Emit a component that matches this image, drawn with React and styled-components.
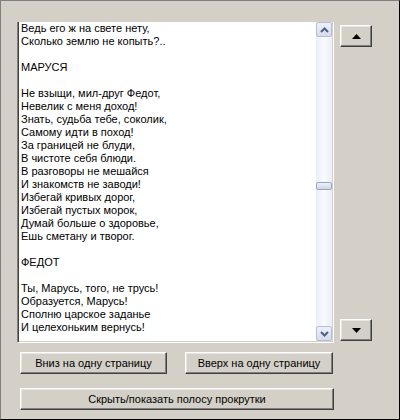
import styled, { createGlobalStyle } from "styled-components";

const GlobalStyle = createGlobalStyle`
  html, body {
    margin: 0;
    padding: 0;
    background: #d4d0c8;
  }
  * {
    box-sizing: border-box;
  }
`;

const POEM = [
  "Ведь его ж на свете нету,",
  "Сколько землю не копыть?..",
  "",
  "МАРУСЯ",
  "",
  "Не взыщи, мил-друг Федот,",
  "Невелик с меня доход!",
  "Знать, судьба тебе, соколик,",
  "Самому идти в поход!",
  "За границей не блуди,",
  "В чистоте себя блюди.",
  "В разговоры не мешайся",
  "И знакомств не заводи!",
  "Избегай кривых дорог,",
  "Избегай пустых морок,",
  "Думай больше о здоровье,",
  "Ешь сметану и творог.",
  "",
  "ФЕДОТ",
  "",
  "Ты, Марусь, того, не трусь!",
  "Образуется, Марусь!",
  "Сполню царское заданье",
  "И целехоньким вернусь!",
];

const Window = styled.div`
  width: 400px;
  height: 420px;
  background: #d4d0c8;
  border-top: 1px solid #808080;
  border-left: 1px solid #808080;
  border-right: 1px solid #000;
  border-bottom: 1px solid #000;
  padding: 21px 0 0 16px;
  display: flex;
  flex-direction: column;
  font-family: "Liberation Sans", Arial, sans-serif;
  font-size: 11px;
  color: #000;
`;

const TopRow = styled.div`
  display: flex;
  align-items: stretch;
`;

const TextBox = styled.div`
  width: 317px;
  height: 321px;
  display: flex;
  background: #fff;
  border-left: 1px solid #808080;
  border-right: 1px solid #fff;
  border-bottom: 1px solid #fff;
  box-shadow: inset 1px 0 #404040, inset -1px 0 #d4d0c8, inset 0 -1px #d4d0c8;
  padding: 0 1px 1px 1px;
`;

const TextContent = styled.div`
  flex: 1;
  overflow: hidden;
  padding: 0 0 0 2px;
  line-height: 13px;
  white-space: pre;
`;

const Line = styled.div`
  height: 13px;
`;

const ScrollBar = styled.div`
  width: 16px;
  display: flex;
  flex-direction: column;
  background: linear-gradient(to right, #eceef6, #fafafe 50%, #eceef6);
`;

const ScrollArrow = styled.div`
  width: 16px;
  height: 15px;
  display: flex;
  align-items: center;
  justify-content: center;
  border: 1px solid #b6bed6;
  border-radius: 2px;
  background: linear-gradient(to bottom, #eef1fa, #d6dcee);
`;

const Track = styled.div`
  flex: 1;
  display: flex;
  flex-direction: column;
`;

const Thumb = styled.div`
  width: 16px;
  height: 8px;
  border: 1px solid #9aa2c0;
  border-radius: 2px;
  background: linear-gradient(to bottom, #f0f2fa, #cfd4e8);
`;

const SideColumn = styled.div`
  display: flex;
  flex-direction: column;
  justify-content: space-between;
  margin-left: 6px;
  padding: 3px 0 2px;
`;

const Button = styled.div`
  width: ${({ $width }) => $width}px;
  height: 22px;
  display: flex;
  align-items: center;
  justify-content: center;
  background: #d4d0c8;
  border-top: 1px solid #fff;
  border-left: 1px solid #fff;
  border-right: 1px solid #404040;
  border-bottom: 1px solid #404040;
  box-shadow: inset -1px -1px #808080, inset 1px 1px #e8e6e2;
  cursor: default;
  white-space: nowrap;
`;

const ButtonRow = styled.div`
  display: flex;
  gap: 18px;
  margin: 9px 0 0 3px;
`;

const WideRow = styled.div`
  display: flex;
  margin: 14px 0 0 3px;
`;

const Chevron = ({ up }) => (
  <svg width="9" height="6" viewBox="0 0 9 6">
    <path
      d={up ? "M1 5 L4.5 1.5 L8 5" : "M1 1 L4.5 4.5 L8 1"}
      fill="none"
      stroke="#4d6185"
      strokeWidth="2"
    />
  </svg>
);

const Triangle = ({ up }) => (
  <svg width="9" height="5" viewBox="0 0 9 5">
    <polygon points={up ? "4.5,0 9,5 0,5" : "0,0 9,0 4.5,5"} fill="#000" />
  </svg>
);

const App = () => {
  const thumbOffset = 145;

  return (
    <>
      <GlobalStyle />
      <Window>
        <TopRow>
          <TextBox>
            <TextContent>
              {POEM.map((line, i) => (
                <Line key={i}>{line}</Line>
              ))}
            </TextContent>
            <ScrollBar>
              <ScrollArrow>
                <Chevron up />
              </ScrollArrow>
              <Track>
                <Thumb style={{ marginTop: thumbOffset }} />
              </Track>
              <ScrollArrow>
                <Chevron />
              </ScrollArrow>
            </ScrollBar>
          </TextBox>
          <SideColumn>
            <Button $width={32}>
              <Triangle up />
            </Button>
            <Button $width={32}>
              <Triangle />
            </Button>
          </SideColumn>
        </TopRow>
        <ButtonRow>
          <Button $width={147}>Вниз на одну страницу</Button>
          <Button $width={148}>Вверх на одну страницу</Button>
        </ButtonRow>
        <WideRow>
          <Button $width={314}>Скрыть/показать полосу прокрутки</Button>
        </WideRow>
      </Window>
    </>
  );
};

export default App;
